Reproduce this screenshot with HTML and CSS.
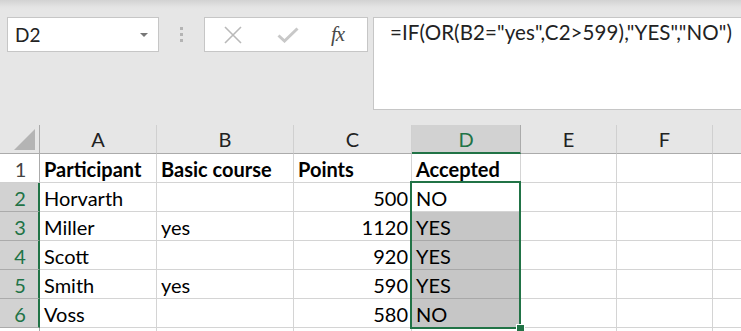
FILE: index.html
```html
<!DOCTYPE html>
<html>
<head>
<meta charset="utf-8">
<link rel="stylesheet" href="styles.css">
</head>
<body>
<div class="ribbon">
  <div class="toolbar">
    <div class="namebox"><span class="ref">D2</span><span class="caret"></span></div>
    <div class="grip"><span></span><span></span><span></span></div>
    <div class="fxbox">
      <svg class="ico-x" width="18" height="18" viewBox="0 0 18 18"><path d="M1 1L17 17M17 1L1 17" stroke="#b9b9b9" stroke-width="1.6" fill="none"/></svg>
      <svg class="ico-ok" width="22" height="16" viewBox="0 0 22 16"><path d="M1.5 8.5L7.5 14L20.5 1.5" stroke="#c8c8c8" stroke-width="3" fill="none"/></svg>
      <span class="fx">fx</span>
    </div>
    <div class="formula">=IF(OR(B2="yes",C2&gt;599),"YES","NO")</div>
  </div>
</div>
<div class="sheet">
  <div class="grid">
    <div class="corner"><span class="tri"></span></div>
    <div class="ch">A</div>
    <div class="ch">B</div>
    <div class="ch">C</div>
    <div class="ch sel">D</div>
    <div class="ch">E</div>
    <div class="ch">F</div>
    <div class="ch last"></div>

    <div class="rh">1</div>
    <div class="c b">Participant</div>
    <div class="c b">Basic course</div>
    <div class="c b">Points</div>
    <div class="c b">Accepted</div>
    <div class="c"></div><div class="c"></div><div class="c last"></div>

    <div class="rh sel">2</div>
    <div class="c">Horvarth</div>
    <div class="c"></div>
    <div class="c n">500</div>
    <div class="c">NO</div>
    <div class="c"></div><div class="c"></div><div class="c last"></div>

    <div class="rh sel">3</div>
    <div class="c">Miller</div>
    <div class="c">yes</div>
    <div class="c n">1120</div>
    <div class="c g">YES</div>
    <div class="c"></div><div class="c"></div><div class="c last"></div>

    <div class="rh sel">4</div>
    <div class="c">Scott</div>
    <div class="c"></div>
    <div class="c n">920</div>
    <div class="c g">YES</div>
    <div class="c"></div><div class="c"></div><div class="c last"></div>

    <div class="rh sel">5</div>
    <div class="c">Smith</div>
    <div class="c">yes</div>
    <div class="c n">590</div>
    <div class="c g">YES</div>
    <div class="c"></div><div class="c"></div><div class="c last"></div>

    <div class="rh sel">6</div>
    <div class="c">Voss</div>
    <div class="c"></div>
    <div class="c n">580</div>
    <div class="c g">NO</div>
    <div class="c"></div><div class="c"></div><div class="c last"></div>

    <div class="rh"></div>
    <div class="c"></div><div class="c"></div><div class="c"></div><div class="c"></div>
    <div class="c"></div><div class="c"></div><div class="c last"></div>
  </div>
  <div class="selection"><span class="handle"></span></div>
</div>
</body>
</html>
```
FILE: styles.css
```css
* { box-sizing: border-box; }
html, body { margin: 0; padding: 0; }
body {
  width: 741px;
  height: 331px;
  overflow: hidden;
  background: #e6e6e6;
  font-family: Lato, "Open Sans", sans-serif;
  color: #000;
}
.ribbon {
  height: 125px;
  background: linear-gradient(#d2d2d2 0px, #e4e4e4 7px, #e6e6e6 10px);
  padding-top: 17px;
}
.toolbar {
  display: flex;
  align-items: flex-start;
  padding-left: 7px;
}
.namebox {
  width: 152px;
  height: 35px;
  background: #fff;
  border: 1px solid #c6c6c6;
  display: flex;
  align-items: center;
  padding-left: 7px;
  padding-right: 10px;
  justify-content: space-between;
}
.ref { font-size: 19px; color: #222; }
.caret {
  width: 0; height: 0;
  border-left: 4px solid transparent;
  border-right: 4px solid transparent;
  border-top: 4px solid #777;
}
.grip {
  width: 45px;
  height: 35px;
  display: flex;
  flex-direction: column;
  align-items: center;
  justify-content: center;
  gap: 3px;
}
.grip span { width: 3px; height: 3px; background: #b4b4b4; }
.fxbox {
  width: 164px;
  height: 35px;
  background: #fff;
  border: 1px solid #c6c6c6;
  display: flex;
  align-items: center;
  padding-left: 19px;
}
.ico-x { margin-right: 35px; }
.ico-ok { margin-right: 32px; }
.fx {
  font-family: "Liberation Serif", serif;
  font-style: italic;
  font-size: 21px;
  color: #4a4a4a;
  letter-spacing: -1px;
}
.formula {
  margin-left: 5px;
  flex: 1;
  height: 93px;
  background: #fff;
  border: 1px solid #c6c6c6;
  border-right: none;
  padding: 2px 0 0 16px;
  font-size: 20.5px;
  letter-spacing: 0.1px;
  color: #222;
}
.sheet { position: relative; background: #fff; height: 206px; overflow: hidden; }
.grid {
  display: grid;
  grid-template-columns: 40px 117px 137px 118px 109px 96px 96px 28px;
  grid-template-rows: 29px repeat(6, 29px) 20px;
}
.corner {
  background: #e6e6e6;
  border-right: 1px solid #ababab;
  border-bottom: 1px solid #ababab;
  position: relative;
}
.tri {
  position: absolute;
  right: 4px;
  bottom: 3px;
  width: 0; height: 0;
  border-left: 21px solid transparent;
  border-bottom: 21px solid #b4b4b4;
}
.ch {
  background: #e6e6e6;
  border-right: 1px solid #d0d0d0;
  border-bottom: 1px solid #ababab;
  text-align: center;
  font-size: 20px;
  line-height: 28px;
  color: #222;
}
.ch.sel {
  background: #d2d2d2;
  color: #217346;
  border-bottom: 2px solid #217346;
  border-right-color: #ababab;
}
.rh {
  background: #fff;
  border-right: 1px solid #ababab;
  border-bottom: 1px solid #d0d0d0;
  text-align: center;
  font-size: 20px;
  line-height: 30px;
  color: #444;
  padding-left: 2px;
}
.rh.sel {
  background: #d2d2d2;
  color: #217346;
  border-right: 2px solid #217346;
  border-bottom-color: #ababab;
}
.c {
  border-right: 1px solid #d4d4d4;
  border-bottom: 1px solid #d4d4d4;
  font-size: 20px;
  line-height: 30px;
  padding: 0 3px 0 4px;
  white-space: nowrap;
  overflow: hidden;
}
.c.b { font-weight: bold; }
.c.n { text-align: right; padding-right: 3px; }
.c.g { background: #c6c6c6; border-bottom-color: #a8a8a8; }
.last { border-right: none; }
.selection {
  position: absolute;
  left: 410px;
  top: 56px;
  width: 111px;
  height: 148px;
  border: 2px solid #217346;
}
.handle {
  position: absolute;
  right: -5px;
  bottom: -5px;
  width: 7px;
  height: 7px;
  background: #217346;
  outline: 1px solid #fff;
}
```
